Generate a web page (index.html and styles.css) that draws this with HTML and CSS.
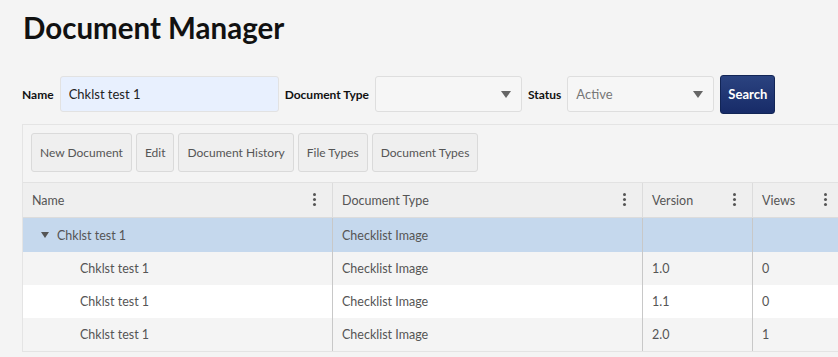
FILE: index.html
```html
<!DOCTYPE html>
<html lang="en">
<head>
  <meta charset="UTF-8"/>
  <title>Document Manager</title>
  <link rel="stylesheet" href="styles.css">
</head>
<body>
  <h1>Document Manager</h1>

  <div class="search-bar">
    <label>Name</label>
    <input type="text" class="name-input" value="Chklst test 1"/>
    <label>Document Type</label>
    <div class="select"><span></span><i class="caret"></i></div>
    <label>Status</label>
    <div class="select"><span class="muted">Active</span><i class="caret"></i></div>
    <button class="search-btn">Search</button>
  </div>

  <div class="panel">
    <div class="toolbar">
      <button>New Document</button>
      <button>Edit</button>
      <button>Document History</button>
      <button>File Types</button>
      <button>Document Types</button>
    </div>

    <div class="grid">
      <div class="row head">
        <div class="cell c-name">Name<span class="kebab"></span></div>
        <div class="cell c-type">Document Type<span class="kebab"></span></div>
        <div class="cell c-ver">Version<span class="kebab"></span></div>
        <div class="cell c-views">Views<span class="kebab"></span></div>
      </div>
      <div class="row group">
        <div class="cell c-name"><i class="tri"></i>Chklst test 1</div>
        <div class="cell c-type">Checklist Image</div>
        <div class="cell c-ver"></div>
        <div class="cell c-views"></div>
      </div>
      <div class="row alt">
        <div class="cell c-name child">Chklst test 1</div>
        <div class="cell c-type">Checklist Image</div>
        <div class="cell c-ver">1.0</div>
        <div class="cell c-views">0</div>
      </div>
      <div class="row">
        <div class="cell c-name child">Chklst test 1</div>
        <div class="cell c-type">Checklist Image</div>
        <div class="cell c-ver">1.1</div>
        <div class="cell c-views">0</div>
      </div>
      <div class="row alt">
        <div class="cell c-name child">Chklst test 1</div>
        <div class="cell c-type">Checklist Image</div>
        <div class="cell c-ver">2.0</div>
        <div class="cell c-views">1</div>
      </div>
    </div>
  </div>
</body>
</html>
```

FILE: styles.css
```css
body {
  margin: 0;
  padding: 0 0 0 22px;
  background: #f4f4f4;
  font-family: 'Lato', sans-serif;
  font-size: 12px;
  color: #555;
  overflow: hidden;
}

h1 {
  margin: 0;
  padding: 10px 0 0 1px;
  height: 73px;
  box-sizing: border-box;
  font-size: 29.5px;
  font-weight: 700;
  color: #111;
}

.search-bar {
  display: flex;
  align-items: center;
  height: 40px;
  margin-top: 1px;
}

.search-bar label {
  font-weight: 700;
  color: #111;
  margin-right: 6px;
}

.name-input {
  width: 219px;
  height: 36px;
  box-sizing: border-box;
  border: 1px solid #e2e2e2;
  border-radius: 3px;
  background: #e8f0fe;
  padding: 0 8px;
  font-family: inherit;
  font-size: 13px;
  color: #222;
  margin-right: 6px;
}

.select {
  width: 147px;
  height: 36px;
  box-sizing: border-box;
  border: 1px solid #dedede;
  border-radius: 3px;
  background: #f6f6f6;
  display: flex;
  align-items: center;
  justify-content: space-between;
  padding: 0 10px 0 8px;
  font-size: 13px;
  margin-right: 6px;
}

.muted {
  color: #777;
}

.caret {
  width: 0;
  height: 0;
  border-left: 5px solid transparent;
  border-right: 5px solid transparent;
  border-top: 7px solid #666;
}

.search-btn {
  width: 55px;
  height: 39px;
  border: 1px solid #122556;
  border-radius: 3px;
  background: linear-gradient(#2b4380, #172b68);
  color: #fff;
  font-family: inherit;
  font-size: 13px;
  font-weight: 700;
  padding: 0;
}

.panel {
  margin-top: 10px;
  width: 840px;
  border: 1px solid #e4e4e4;
  border-right: none;
  height: 226px;
}

.toolbar {
  display: flex;
  gap: 4px;
  padding: 8px 8px 10px;
}

.toolbar button {
  height: 39px;
  padding: 0 8px;
  background: #efefef;
  border: 1px solid #dadada;
  border-radius: 3px;
  font-family: inherit;
  font-size: 12px;
  color: #555;
}

.grid {
  border-top: 1px solid #e2e2e2;
}

.row {
  display: flex;
  height: 33px;
  background: #fff;
}

.row.alt {
  background: #f4f4f4;
}

.row.group {
  background: #c5d8ed;
  height: 34px;
}

.row.head {
  background: #efefef;
  height: 34px;
  border-bottom: 1px solid #dcdcdc;
}

.cell {
  display: flex;
  align-items: center;
  padding-left: 9px;
  box-sizing: border-box;
  border-right: 1px solid #c8c8c8;
  font-size: 12.5px;
  position: relative;
}

.head .cell {
  border-right-color: #dcdcdc;
}

.c-name { width: 310px; }
.c-type { width: 310px; }
.c-ver { width: 110px; }
.c-views { width: 88px; }

.child {
  padding-left: 57px;
}

.tri {
  width: 0;
  height: 0;
  border-left: 4px solid transparent;
  border-right: 4px solid transparent;
  border-top: 6px solid #555;
  margin: 0 8px 0 9px;
}

.kebab {
  position: absolute;
  right: 16px;
  top: 10px;
  width: 3px;
  height: 3px;
  border-radius: 50%;
  background: #555;
  box-shadow: 0 5px 0 #555, 0 10px 0 #555;
}

.c-views .kebab {
  right: 13px;
}
```
